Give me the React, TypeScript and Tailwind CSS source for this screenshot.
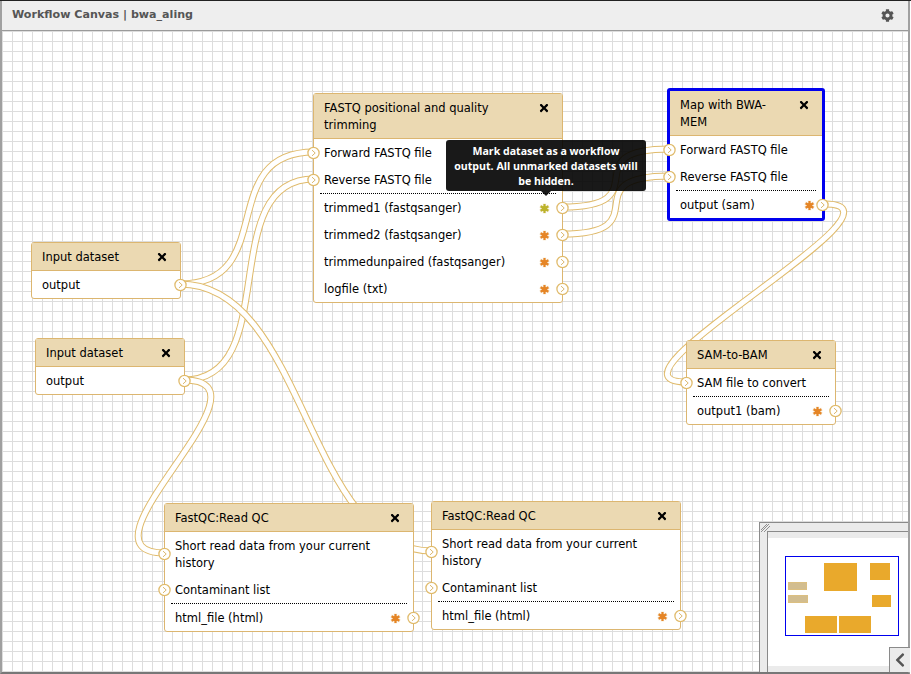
import React from 'react'
import { FaCog, FaChevronLeft, FaTimes } from 'react-icons/fa'

type Row = { label: string; marked?: boolean }

type NodeProps = {
  title: string
  inputs?: Row[]
  outputs: Row[]
  className: string
  selected?: boolean
}

// terminal centres in page coordinates, the svg viewBox starts at the canvas origin
const connectors: [number, number, number, number][] = [
  [180, 284, 314, 152],
  [184, 380, 314, 179],
  [180, 284, 432, 551],
  [184, 380, 165, 553],
  [562, 207, 670, 149],
  [562, 234, 670, 176],
  [825, 204, 686, 382],
]

function connectorPath([x1, y1, x2, y2]: [number, number, number, number]) {
  const shift = Math.min(Math.max(Math.abs(x2 - x1) / 2, 100), 300)
  return `M ${x1} ${y1} C ${x1 + shift} ${y1} ${x2 - shift} ${y2} ${x2} ${y2}`
}

function Terminal({ side }: { side: 'left' | 'right' }) {
  return (
    <svg
      viewBox="0 0 13 13"
      className={`absolute top-1/2 w-[13px] h-[13px] -translate-y-1/2 ${side === 'left' ? '-left-[7px]' : '-right-[7px]'}`}
    >
      <circle cx="6.5" cy="6.5" r="5.6" fill="#fff" stroke="#e0bb6c" strokeWidth="1.3" />
      <path d="M5 3.6 L8.2 6.5 L5 9.4" fill="none" stroke="#dcb970" strokeWidth="1" />
    </svg>
  )
}

// the "workflow output" mark, a fat many-armed star
function OutputMark({ marked }: { marked?: boolean }) {
  const color = marked ? '#bcb32c' : '#e58526'
  return (
    <svg viewBox="0 0 11 11" className="w-[11px] h-[11px]">
      <g stroke="#f3e3c4" strokeWidth="3.4" opacity="0.6">
        <path d="M5.5 0.5 V10.5 M1 3 L10 8 M1 8 L10 3" />
      </g>
      <g stroke={color} strokeWidth="2.2">
        <path d="M5.5 1 V10 M1.6 3.2 L9.4 7.8 M1.6 7.8 L9.4 3.2" />
      </g>
      <circle cx="5.5" cy="5.5" r="2.6" fill={color} />
    </svg>
  )
}

function WorkflowNode({ title, inputs = [], outputs, className, selected }: NodeProps) {
  return (
    <div
      className={`absolute bg-white rounded-[3px] ${
        selected ? 'border-[3px] border-[#0000ee]' : 'border border-[#dcb670]'
      } ${className}`}
    >
      <div className="flex justify-between items-start bg-[#ebd9b2] border-b border-[#dcb670] pl-[10px] pr-[12px] pt-[6px] pb-[4px] leading-[17px]">
        <span>{title}</span>
        <FaTimes className="mt-[2px] ml-[10px] w-[12px] h-[12px] shrink-0 text-black" />
      </div>
      {inputs.map((row) => (
        <div key={row.label} className="relative px-[10px] pt-[6px] pb-[4px] leading-[17px]">
          <Terminal side="left" />
          {row.label}
        </div>
      ))}
      {inputs.length > 0 && <div className="mx-[6px] border-t border-dotted border-black" />}
      {outputs.map((row) => (
        <div
          key={row.label}
          className={`relative flex justify-between items-center pl-[10px] pt-[6px] pb-[4px] leading-[17px] ${selected ? 'pr-[7px]' : 'pr-[12px]'}`}
        >
          <span>{row.label}</span>
          {row.label !== 'output' && <OutputMark marked={row.marked} />}
          <Terminal side="right" />
        </div>
      ))}
    </div>
  )
}

function Overview() {
  return (
    <div className="absolute left-[757px] top-[491px] w-[149px] h-[150px] bg-[#ebebeb] border-l border-t border-[#8a8a8a] pl-[7px] pt-[8px]">
      <svg viewBox="0 0 9 8" className="absolute left-[1px] top-[1px] w-[9px] h-[8px]">
        <path d="M0 6 L6 0 M0 8 L8 0 M3 8 L9 2" stroke="#777" strokeWidth="0.8" />
      </svg>
      <div className="relative h-full border-l border-t border-[#8a8a8a] bg-white">
        <div className="h-[6px] bg-[#ebebeb]" />
        <div className="absolute left-[17px] top-[24px] w-[114px] h-[80px] border border-[#0000ee]" />
        <div className="absolute left-[56px] top-[31px] w-[33px] h-[28px] bg-[#e9a92c]" />
        <div className="absolute left-[102px] top-[31px] w-[20px] h-[17px] bg-[#e9a92c]" />
        <div className="absolute left-[20px] top-[50px] w-[19px] h-[8px] bg-[#d2bd8f] border border-[#dcbf80]" />
        <div className="absolute left-[20px] top-[63px] w-[20px] h-[8px] bg-[#d2bd8f] border border-[#dcbf80]" />
        <div className="absolute left-[104px] top-[63px] w-[19px] h-[12px] bg-[#e9a92c]" />
        <div className="absolute left-[37px] top-[84px] w-[32px] h-[17px] bg-[#e9a92c]" />
        <div className="absolute left-[71px] top-[84px] w-[32px] h-[17px] bg-[#e9a92c]" />
        <div className="absolute left-0 right-0 bottom-0 h-[6px] bg-[#ebebeb]" />
      </div>
    </div>
  )
}

export default function App() {
  return (
    <div className="w-[911px] h-[674px] flex flex-col bg-white border-t border-[#222] font-['DejaVu_Sans',sans-serif] text-[11.5px] text-black overflow-hidden">
      <div className="flex flex-col flex-1 w-[910px] border-l-2 border-r-2 border-[#a0a0a0] border-b-2 border-b-[#777777]">
        {/* Header */}
        <div className="flex justify-between items-center h-[30px] bg-[#eeeeee] border-b border-[#9a9a9a] pl-[10px] pr-[14px]">
          <span className="font-bold text-[#555555] text-[11.1px]">Workflow Canvas | bwa_aling</span>
          <FaCog className="w-[13px] h-[13px] text-[#555555]" />
        </div>

        {/* Canvas */}
        <div className="relative flex-1 bg-white bg-[linear-gradient(#dddddd_1px,transparent_1px),linear-gradient(90deg,#dddddd_1px,transparent_1px)] bg-[size:10px_10px]">
          <svg viewBox="2 31 906 641" className="absolute left-0 top-0 w-[906px] h-[641px]">
            {connectors.map((c, i) => (
              <g key={i} fill="none">
                <path d={connectorPath(c)} stroke="#e0bb6c" strokeWidth="7" />
                <path d={connectorPath(c)} stroke="#ffffff" strokeWidth="5" />
              </g>
            ))}
          </svg>

          <WorkflowNode
            title="FASTQ positional and quality trimming"
            className="left-[311px] top-[62px] w-[250px]"
            inputs={[{ label: 'Forward FASTQ file' }, { label: 'Reverse FASTQ file' }]}
            outputs={[
              { label: 'trimmed1 (fastqsanger)', marked: true },
              { label: 'trimmed2 (fastqsanger)' },
              { label: 'trimmedunpaired (fastqsanger)' },
              { label: 'logfile (txt)' },
            ]}
          />
          <WorkflowNode
            title="Map with BWA-MEM"
            selected
            className="left-[665px] top-[57px] w-[158px]"
            inputs={[{ label: 'Forward FASTQ file' }, { label: 'Reverse FASTQ file' }]}
            outputs={[{ label: 'output (sam)' }]}
          />
          <WorkflowNode
            title="Input dataset"
            className="left-[29px] top-[211px] w-[150px]"
            outputs={[{ label: 'output' }]}
          />
          <WorkflowNode
            title="Input dataset"
            className="left-[33px] top-[307px] w-[150px]"
            outputs={[{ label: 'output' }]}
          />
          <WorkflowNode
            title="SAM-to-BAM"
            className="left-[684px] top-[309px] w-[150px]"
            inputs={[{ label: 'SAM file to convert' }]}
            outputs={[{ label: 'output1 (bam)' }]}
          />
          <WorkflowNode
            title="FastQC:Read QC"
            className="left-[162px] top-[472px] w-[250px]"
            inputs={[{ label: 'Short read data from your current history' }, { label: 'Contaminant list' }]}
            outputs={[{ label: 'html_file (html)' }]}
          />
          <WorkflowNode
            title="FastQC:Read QC"
            className="left-[429px] top-[470px] w-[250px]"
            inputs={[{ label: 'Short read data from your current history' }, { label: 'Contaminant list' }]}
            outputs={[{ label: 'html_file (html)' }]}
          />

          {/* Tooltip */}
          <div className="absolute left-[444px] top-[109px] w-[200px] h-[51px] bg-black/90 rounded-[3px] px-[6px] pt-[4px] text-center text-white font-bold font-['Open_Sans',sans-serif] text-[10.6px] leading-[15px]">
            Mark dataset as a workflow output. All unmarked datasets will be hidden.
            <div className="absolute left-1/2 -bottom-[5px] -ml-[5px] w-0 h-0 border-x-[5px] border-x-transparent border-t-[5px] border-t-black/90" />
          </div>

          <Overview />
          <div className="absolute left-[887px] top-[616px] w-[21px] h-[25px] flex items-center justify-center bg-[#ebebeb] border-l border-t border-[#8a8a8a]">
            <FaChevronLeft className="w-[14px] h-[16px] text-[#555555]" />
          </div>
        </div>
      </div>
    </div>
  )
}
